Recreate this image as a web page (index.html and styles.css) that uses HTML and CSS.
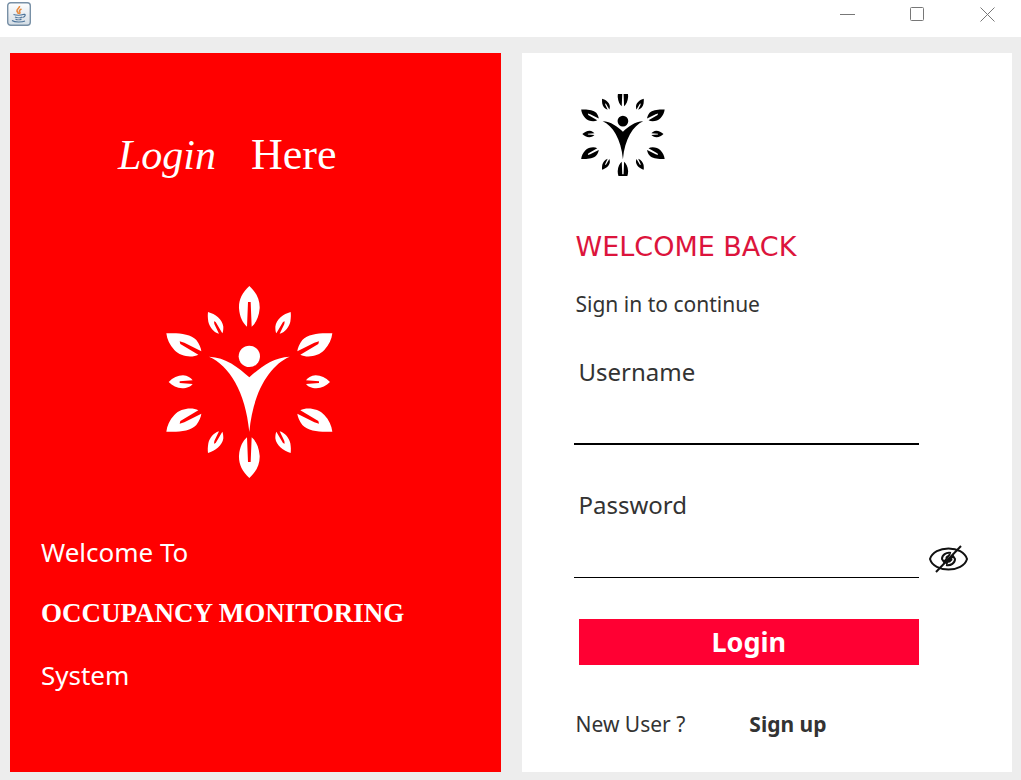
FILE: index.html
```html
<!DOCTYPE html>
<html lang="en">
<head>
<meta charset="utf-8">
<title>Login</title>
<link rel="stylesheet" href="styles.css">
</head>
<body>
<svg class="sprite" aria-hidden="true">
  <defs>
    <path id="leaf-top" d="M283 18C305 38 315 60 314 85C312 112 302 130 290 140L287 66L279 66L276 140C264 130 254 112 252 85C251 60 261 38 283 18Z"/>
    <g id="leaves">
      <path d="M532 160C500 158 460 160 442 180C433 192 428 205 427 214L478 188L492 184L490 192L436 224C455 234 490 230 508 210C522 195 530 178 532 160Z"/>
      <path d="M407 96C385 102 364 118 361 140C361 150 362 155 364 160L384 126L389 124L388 132L374 161C392 156 402 140 406 125C408 112 408 105 407 96Z"/>
    </g>
    <path id="leaf-side" d="M525 306C512 293 498 287 482 286C468 287 458 294 453 301L492 304L492 309L453 312C458 319 470 325 484 325C500 324 514 317 525 306Z"/>
    <g id="emblem">
      <use href="#leaf-top"/>
      <use href="#leaf-top" transform="matrix(1 0 0 -1 0 612)"/>
      <use href="#leaves"/>
      <use href="#leaves" transform="matrix(-1 0 0 1 566 0)"/>
      <use href="#leaves" transform="matrix(1 0 0 -1 0 615)"/>
      <use href="#leaves" transform="matrix(-1 0 0 -1 566 615)"/>
      <use href="#leaf-side"/>
      <use href="#leaf-side" transform="matrix(-1 0 0 1 566 0)"/>
      <circle cx="283" cy="229" r="32"/>
      <path d="M162 230C212 232 250 262 283 292C316 262 354 232 404 230C344 256 294 335 283 456C272 335 222 256 162 230Z"/>
    </g>
  </defs>
</svg>
<header class="titlebar">
  <svg class="java-icon" viewBox="0 0 24 24" aria-hidden="true">
    <defs>
      <linearGradient id="tile" x1="0" y1="0" x2="0" y2="1">
        <stop offset="0" stop-color="#fff"/><stop offset="1" stop-color="#d3dce4"/>
      </linearGradient>
    </defs>
    <rect x="0.700" y="0.700" width="22.600" height="22.600" rx="3" fill="url(#tile)" stroke="#7890a6" stroke-width="1.4"/>
    <path d="M12.500 4C13 6 9.500 7 10 9C10.200 10 11.500 10.500 11.300 12M14.500 7C12.500 8 12 9 12.800 10C13.300 10.700 12.700 11.300 12.300 12" fill="none" stroke="#e8883a" stroke-width="1.600"/>
    <path d="M6.500 12.500C9 13.500 14 13.500 16 12.500M8 15C10 16 13.500 16 15 15M8.500 17C10 18 13 18 14.500 17M5 18.500C8 20.500 15 20.300 18 19M16 12.500C19 11.500 19 14.500 15.500 15.500" fill="none" stroke="#4c7399" stroke-width="1.200"/>
  </svg>
  <div class="window-controls">
    <button type="button" aria-label="Minimize"><svg viewBox="0 0 16 16"><path d="M0 7.500H15"/></svg></button>
    <button type="button" aria-label="Maximize"><svg viewBox="0 0 16 16"><rect x="0.500" y="0.500" width="13" height="13" rx="1"/></svg></button>
    <button type="button" aria-label="Close"><svg viewBox="0 0 16 16"><path d="M0.500 0.500L14.500 14.500M14.500 0.500L0.500 14.500"/></svg></button>
  </div>
</header>
<main class="content">
  <section class="panel intro">
    <h1 class="intro-title"><span class="script">Login</span><span>Here</span></h1>
    <svg class="intro-logo" viewBox="0 0 570 615" aria-hidden="true"><use href="#emblem"/></svg>
    <p>Welcome To</p>
    <p class="product">OCCUPANCY MONITORING</p>
    <p>System</p>
  </section>
  <section class="panel signin">
    <svg class="signin-logo" viewBox="33 68 501 488" aria-hidden="true"><use href="#emblem"/></svg>
    <h2>WELCOME BACK</h2>
    <p class="subtitle">Sign in to continue</p>
    <form class="form">
      <label for="username">Username</label>
      <input class="strong-line" id="username" type="text">
      <label for="password">Password</label>
      <input id="password" type="password">
      <button class="reveal" type="button" aria-label="Show password">
        <svg viewBox="0 0 39 28"><path d="M1 14C3 7 11 3.500 19.500 3.500S36 7 38 14C36 21 28 24.500 19.500 24.500S3 21 1 14Z"/><path d="M22 8C17 7 13 10 13 14L15 17L21 9M17 20C22 21 26 18 26 14L24 11L17 19M17 13L19 11M20 17L23 14"/><path d="M7 27L32 1"/></svg>
      </button>
      <button class="submit" type="button">Login</button>
    </form>
    <p class="signup"><span>New User ?</span><a href="#">Sign up</a></p>
  </section>
</main>
</body>
</html>
```
FILE: styles.css
```css
* { box-sizing: border-box; }

body {
  margin: 0;
  min-height: 100vh;
  display: flex;
  flex-direction: column;
  background: #ededed;
  color: #333;
  font-family: "Noto Sans", "Segoe UI", sans-serif;
}

h1, h2, p { margin: 0; font-weight: 400; }
button { border: 0; padding: 0; background: none; font: inherit; cursor: pointer; }
.sprite { position: absolute; width: 0; height: 0; }

.titlebar {
  display: flex;
  justify-content: space-between;
  height: 37px;
  padding: 2px 25px 0 7px;
  background: #fff;
}
.java-icon { width: 24px; height: 24px; }
.window-controls { display: flex; gap: 54px; height: 25px; }
.window-controls svg {
  display: block;
  width: 16px;
  height: 16px;
  fill: none;
  stroke: #777;
}

.content {
  flex: 1;
  display: grid;
  grid-template-columns: 1fr 1fr;
  gap: 21px;
  padding: 16px 9px 8px 10px;
}

.intro {
  padding: 72px 31px 40px;
  background: #f00;
  color: #fff;
  font-size: 26px;
  line-height: 32px;
}
.intro-title {
  display: flex;
  gap: 35px;
  padding-left: 77px;
  font: 44px/60px "Liberation Serif", "Times New Roman", serif;
}
.script { font-family: Vivaldi, "Liberation Serif", serif; font-size: 42px; font-style: italic; }
.intro-logo {
  display: block;
  width: 190px;
  height: 205px;
  margin: 95px 0 51px 114px;
  fill: currentColor;
}
.product {
  margin: 29px 0 30px;
  font-family: "Liberation Serif", "Times New Roman", serif;
  font-size: 27px;
  font-weight: 700;
}

.signin { padding: 41px 44px 34px 52px; background: #fff; }
.signin-logo {
  display: block;
  width: 84px;
  height: 82px;
  margin-left: 7px;
  fill: #000;
}
.signin h2 {
  margin-top: 55px;
  padding-left: 2px;
  color: #dc143c;
  font-family: "DejaVu Sans", Verdana, sans-serif;
  font-size: 27px;
  line-height: 32px;
}
.subtitle { margin: 27px 0 38px; padding-left: 2px; font-size: 21px; line-height: 28px; }

.form {
  display: grid;
  grid-template-columns: 1fr 39px;
  column-gap: 10px;
}
.form label { grid-column: 1; padding-left: 5px; font-size: 24px; line-height: 32px; }
.form input {
  grid-column: 1;
  width: 100%;
  height: 57px;
  padding: 20px 5px 0;
  border: 0;
  border-bottom: 1px solid #000;
  outline: 0;
  background: transparent;
  font: inherit;
  font-size: 22px;
}
.form .strong-line { border-bottom-width: 2px; margin-bottom: 44px; }
.reveal { align-self: end; margin-bottom: 5px; }
.reveal svg {
  display: block;
  width: 39px;
  height: 28px;
  fill: none;
  stroke: #111;
  stroke-width: 2;
}
.submit {
  grid-column: 1;
  height: 46px;
  margin: 41px 0 0 5px;
  padding-bottom: 2px;
  background: #ff0033;
  color: #fff;
  font-size: 27px;
  font-weight: 700;
}

.signup {
  display: flex;
  gap: 64px;
  margin-top: 45px;
  padding-left: 2px;
  font-size: 21px;
  line-height: 28px;
}
.signup a { color: #333; font-weight: 700; text-decoration: none; }
```
